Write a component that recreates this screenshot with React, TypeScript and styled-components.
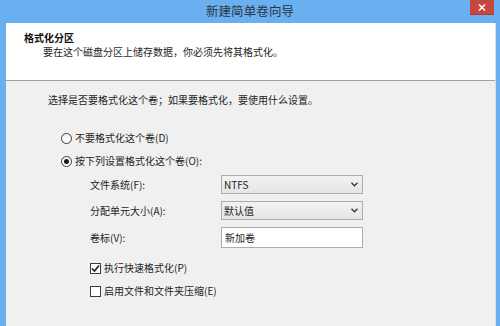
import styled, { createGlobalStyle } from "styled-components";

const GlobalStyle = createGlobalStyle`
  html, body {
    margin: 0;
    padding: 0;
    background: #6aaff0;
  }
  * {
    box-sizing: border-box;
  }
`;

const FONT = `"Noto Sans CJK SC", "Liberation Sans", sans-serif`;

const StyledWindow = styled.div`
  width: 500px;
  height: 326px;
  display: flex;
  flex-direction: column;
  background-color: #6aaff0;
  font-family: ${FONT};
  font-size: 10px;
  color: #1e1e1e;
  overflow: hidden;
`;

const StyledTitleBar = styled.div`
  height: 23px;
  flex-shrink: 0;
  display: grid;
  grid-template-columns: 24px 1fr 24px;
  align-items: start;
  padding: 0 6px;
`;

const StyledTitle = styled.div`
  grid-column: 2;
  text-align: center;
  font-size: 12.5px;
  line-height: 22px;
  color: #2b3440;
  letter-spacing: 0.1px;
`;

const StyledCloseButton = styled.div`
  grid-column: 3;
  width: 24px;
  height: 15px;
  background: #c7463e;
  border-bottom: 1px solid #b03a33;
  display: flex;
  align-items: center;
  justify-content: center;
`;

const StyledFrame = styled.div`
  flex: 1;
  margin: 0 4px 0 6px;
  display: flex;
  flex-direction: column;
  border-right: 1px solid #d6dde6;
`;

const StyledHeader = styled.div`
  height: 58px;
  flex-shrink: 0;
  background-color: #ffffff;
  padding: 8px 0 0 18px;
  border-bottom: 1px solid #a0a0a0;
`;

const StyledHeading = styled.div`
  font-weight: 700;
  line-height: 14px;
  color: #111111;
`;

const StyledSub = styled.div`
  line-height: 14px;
  padding-left: 19px;
`;

const StyledBody = styled.div`
  flex: 1;
  background-color: #f0f0f0;
  padding: 12px 0 0 42px;
  display: flex;
  flex-direction: column;
`;

const StyledIntro = styled.div`
  line-height: 14px;
  margin-bottom: 24px;
`;

const StyledOption = styled.div`
  height: 23px;
  display: flex;
  align-items: flex-start;
  padding-left: 13px;
  line-height: 14px;
`;

const StyledRadio = styled.span<{ $checked?: boolean }>`
  width: 11px;
  height: 11px;
  margin: 2px 3px 0 0;
  border-radius: 50%;
  border: 1px solid #3c3c3c;
  background: linear-gradient(#f4f4f4, #ffffff);
  display: flex;
  align-items: center;
  justify-content: center;
  &::after {
    content: "";
    width: 5px;
    height: 5px;
    border-radius: 50%;
    background-color: #1a1a1a;
    display: ${(p) => (p.$checked ? "block" : "none")};
  }
`;

const StyledSettings = styled.div`
  display: grid;
  grid-template-columns: 131px 142px;
  row-gap: 7px;
  padding-left: 42px;
  margin-top: -2px;
  align-items: center;
`;

const StyledLabel = styled.div`
  line-height: 14px;
`;

const StyledSelect = styled.div`
  height: 19px;
  border: 1px solid #acacac;
  background: linear-gradient(#f2f2f2, #e5e5e5);
  display: flex;
  align-items: center;
  justify-content: space-between;
  padding: 0 4px 0 2px;
  line-height: 14px;
`;

const StyledInput = styled.div`
  height: 21px;
  border: 1px solid #abadb3;
  background-color: #ffffff;
  display: flex;
  align-items: center;
  padding-left: 3px;
  line-height: 14px;
`;

const StyledChecks = styled.div`
  display: flex;
  flex-direction: column;
  gap: 9px;
  padding-left: 42px;
  margin-top: 13px;
`;

const StyledCheckRow = styled.div`
  display: flex;
  align-items: center;
  line-height: 14px;
`;

const StyledBox = styled.span`
  width: 11px;
  height: 11px;
  margin-right: 3px;
  border: 1px solid #3c3c3c;
  background-color: #ffffff;
  display: flex;
  align-items: center;
  justify-content: center;
`;

const Chevron = () => (
  <svg width="7" height="5" viewBox="0 0 7 5">
    <path d="M0.5 0.8 L3.5 3.8 L6.5 0.8" fill="none" stroke="#333" strokeWidth="1.3" />
  </svg>
);

const Check = () => (
  <svg width="9" height="9" viewBox="0 0 9 9">
    <path d="M1 4.5 L3.5 7 L8 1.5" fill="none" stroke="#1a1a1a" strokeWidth="1.6" />
  </svg>
);

const CloseIcon = () => (
  <svg width="8" height="7" viewBox="0 0 8 7">
    <path d="M1 0.5 L7 6.5 M7 0.5 L1 6.5" stroke="#ffffff" strokeWidth="1.6" />
  </svg>
);

const CheckOption = ({ checked, text }: { checked?: boolean; text: string }) => (
  <StyledCheckRow>
    <StyledBox>{checked && <Check />}</StyledBox>
    <span>{text}</span>
  </StyledCheckRow>
);

export default function App() {
  return (
    <>
      <GlobalStyle />
      <StyledWindow>
        <StyledTitleBar>
          <StyledTitle>新建简单卷向导</StyledTitle>
          <StyledCloseButton>
            <CloseIcon />
          </StyledCloseButton>
        </StyledTitleBar>
        <StyledFrame>
          <StyledHeader>
            <StyledHeading>格式化分区</StyledHeading>
            <StyledSub>要在这个磁盘分区上储存数据，你必须先将其格式化。</StyledSub>
          </StyledHeader>
          <StyledBody>
            <StyledIntro>选择是否要格式化这个卷；如果要格式化，要使用什么设置。</StyledIntro>
            <StyledOption>
              <StyledRadio />
              <span>不要格式化这个卷(D)</span>
            </StyledOption>
            <StyledOption>
              <StyledRadio $checked />
              <span>按下列设置格式化这个卷(O):</span>
            </StyledOption>
            <StyledSettings>
              <StyledLabel>文件系统(F):</StyledLabel>
              <StyledSelect>
                <span>NTFS</span>
                <Chevron />
              </StyledSelect>
              <StyledLabel>分配单元大小(A):</StyledLabel>
              <StyledSelect>
                <span>默认值</span>
                <Chevron />
              </StyledSelect>
              <StyledLabel>卷标(V):</StyledLabel>
              <StyledInput>新加卷</StyledInput>
            </StyledSettings>
            <StyledChecks>
              <CheckOption checked text="执行快速格式化(P)" />
              <CheckOption text="启用文件和文件夹压缩(E)" />
            </StyledChecks>
          </StyledBody>
        </StyledFrame>
      </StyledWindow>
    </>
  );
}
